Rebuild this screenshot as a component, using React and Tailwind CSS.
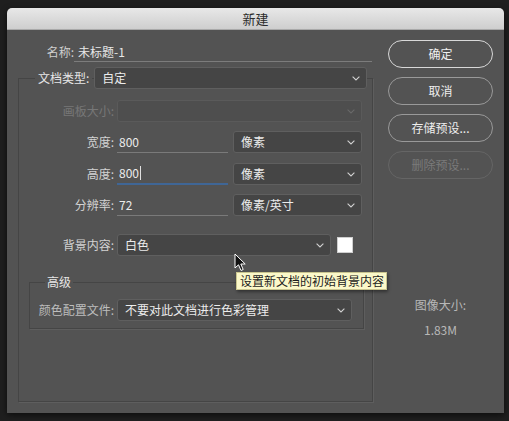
import React from "react";

function Chevron({ c = "#cfcfcf" }) {
  return (
    <svg width="8" height="5" viewBox="0 0 8 5">
      <path d="M0.6 0.6 L4 4 L7.4 0.6" fill="none" stroke={c} strokeWidth="1.1" />
    </svg>
  );
}

function Select({ w, text, disabled }) {
  return (
    <div
      className={`flex h-[22px] items-center justify-between rounded-[3px] border pl-[7px] pr-[6px] ${
        disabled ? "border-[#5a5a5a] bg-[#4e4e4e]" : "border-[#5f5f5f] bg-[#454545] text-[#ececec]"
      } ${w}`}
    >
      <span className="leading-none">{text}</span>
      <Chevron c={disabled ? "#686868" : "#cfcfcf"} />
    </div>
  );
}

function Btn({ children, primary, disabled }) {
  return (
    <div
      className={`flex h-[28px] w-[105px] items-center justify-center rounded-full border text-[12px] ${
        primary
          ? "border-[#d8d8d8] text-[#f0f0f0]"
          : disabled
          ? "border-[#656565] text-[#7a7a7a]"
          : "border-[#999999] text-[#eeeeee]"
      }`}
    >
      {children}
    </div>
  );
}

export default function App() {
  return (
    <div className="min-h-[421px] w-[509px] bg-[#1f1f1f] pl-[7px] pt-[8px] font-['Noto_Sans_CJK_SC','Noto_Sans',sans-serif] text-[12px]">
      <div className="relative flex h-[405px] w-[497px] flex-col overflow-hidden rounded-t-[5px] shadow-[0_2px_6px_rgba(0,0,0,0.6)]">
        <div className="flex h-[22px] items-center justify-center border-b border-[#a9a9a9] bg-gradient-to-b from-[#e8e8e8] to-[#cecece] text-[13px] text-[#2c2c2c]">
          新建
        </div>
        <div className="flex flex-1 bg-[#535353]">
          {/* left column */}
          <div className="w-[365px]">
            <div className="mt-[12px] flex h-[20px] items-center">
              <div className="w-[67px] text-right text-[#cfcfcf]">名称:</div>
              <div className="flex h-full flex-1 items-center border-b border-[#7c7c7c] pl-[4px] text-[#e8e8e8]">
                未标题-1
              </div>
            </div>

            <div className="ml-[11px] mt-[16px] h-[324px] w-[355px] border border-[#454545] shadow-[1px_1px_0_#5e5e5e]">
              <div className="-mt-[12px] flex h-[22px] items-center">
                <div className="ml-[16px] bg-[#535353] px-[3px] text-[#e6e6e6]">文档类型:</div>
                <div className="ml-[2px]">
                  <Select w="w-[273px]" text="自定" />
                </div>
              </div>

              <div className="mt-[11px] flex h-[22px] items-center">
                <div className="w-[95px] text-right text-[#777777]">画板大小:</div>
                <div className="ml-[3px]">
                  <Select w="w-[245px]" text="" disabled />
                </div>
              </div>

              <div className="mt-[9px] flex h-[22px] items-center">
                <div className="w-[95px] text-right text-[#d2d2d2]">宽度:</div>
                <div className="ml-[3px] flex h-[22px] w-[111px] items-center border-b border-[#7a7a7a] pl-[2px] text-[#ececec]">
                  800
                </div>
                <div className="ml-[5px]">
                  <Select w="w-[129px]" text="像素" />
                </div>
              </div>

              <div className="mt-[10px] flex h-[22px] items-center">
                <div className="w-[95px] text-right text-[#d2d2d2]">高度:</div>
                <div className="ml-[3px] flex h-[22px] w-[111px] items-center border-b-2 border-[#3f6696] pl-[2px] text-[#ececec]">
                  800
                  <span className="ml-[1px] inline-block h-[14px] w-px bg-[#e0e0e0]"></span>
                </div>
                <div className="ml-[5px]">
                  <Select w="w-[129px]" text="像素" />
                </div>
              </div>

              <div className="mt-[9px] flex h-[22px] items-center">
                <div className="w-[95px] text-right text-[#d2d2d2]">分辨率:</div>
                <div className="ml-[3px] flex h-[22px] w-[111px] items-center border-b border-[#7a7a7a] pl-[2px] text-[#ececec]">
                  72
                </div>
                <div className="ml-[5px]">
                  <Select w="w-[129px]" text="像素/英寸" />
                </div>
              </div>

              <div className="mt-[18px] flex h-[22px] items-center">
                <div className="w-[95px] text-right text-[#d2d2d2]">背景内容:</div>
                <div className="ml-[3px]">
                  <Select w="w-[214px]" text="白色" />
                </div>
                <div className="ml-[6px] h-[16px] w-[16px] border border-[#cfcfcf] bg-white"></div>
              </div>

              <div className="ml-[10px] mt-[26px] w-[335px] border border-[#454545] pb-[7px] shadow-[1px_1px_0_#5e5e5e]">
                <div className="-mt-[9px] flex h-[16px] items-center">
                  <div className="ml-[15px] bg-[#535353] px-[2px] text-[#e6e6e6]">高级</div>
                </div>
                <div className="mt-[9px] flex h-[22px] items-center">
                  <div className="w-[84px] text-right text-[#bdbdbd]">颜色配置文件:</div>
                  <div className="ml-[3px]">
                    <Select w="w-[235px]" text="不要对此文档进行色彩管理" />
                  </div>
                </div>
              </div>
            </div>
          </div>

          {/* right column */}
          <div className="flex flex-1 flex-col pl-[16px] pt-[10px]">
            <div className="flex flex-col gap-[9px]">
              <Btn primary>确定</Btn>
              <Btn>取消</Btn>
              <Btn>存储预设...</Btn>
              <Btn disabled>删除预设...</Btn>
            </div>
            <div className="mt-[118px] w-[105px] text-center leading-[16px] text-[#b8b8b8]">图像大小:</div>
            <div className="mt-[9px] w-[105px] text-center leading-[16px] text-[#b8b8b8]">1.83M</div>
          </div>
        </div>

        {/* tooltip */}
        <div className="absolute left-[229px] top-[264px] flex h-[18px] w-[151px] items-center border border-[#c9c58f] bg-[#fbf8c9] pl-[3px] text-[12px] leading-none text-[#1c1c1c] shadow-[1px_2px_3px_rgba(0,0,0,0.4)]">
          设置新文档的初始背景内容
        </div>
        {/* mouse cursor */}
        <svg className="absolute left-[227px] top-[245px]" width="13" height="19" viewBox="0 0 13 19">
          <path d="M1 1 L1 15 L4.5 11.8 L7 17.5 L9.2 16.5 L6.8 11 L11.2 11 Z" fill="#111" stroke="#fff" strokeWidth="1" strokeLinejoin="round" />
        </svg>
      </div>
    </div>
  );
}
